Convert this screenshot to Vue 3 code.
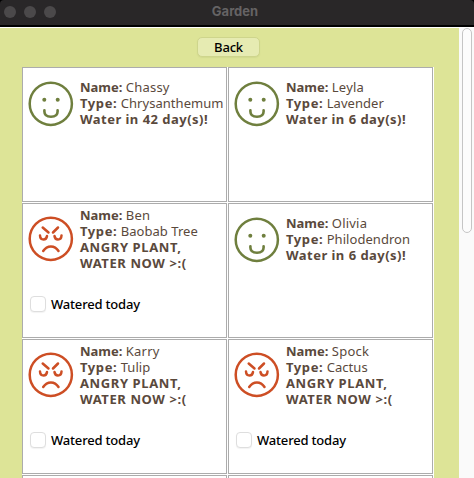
<script setup>
const plants = [
  { name: 'Chassy', type: 'Chrysanthemum', days: 42 },
  { name: 'Leyla', type: 'Lavender', days: 6 },
  { name: 'Ben', type: 'Baobab Tree', days: 0 },
  { name: 'Olivia', type: 'Philodendron', days: 6 },
  { name: 'Karry', type: 'Tulip', days: 0 },
  { name: 'Spock', type: 'Cactus', days: 0 },
]
</script>

<template>
  <div class="window">
    <header class="titlebar">
      <div class="lights"><i></i><i></i><i></i></div>
      <span class="title">Garden</span>
    </header>
    <div class="body">
      <main class="content">
        <button class="back">Back</button>
        <div class="grid">
          <section v-for="p in plants" :key="p.name" class="card" :class="{ angry: !p.days }">
            <div class="info">
              <svg v-if="p.days" class="face" viewBox="0 0 46 46">
                <circle cx="22.8" cy="22.8" r="21.1" stroke-width="2.5" />
                <circle class="dot" cx="16.3" cy="18.8" r="2" />
                <circle class="dot" cx="29.700" cy="18.8" r="2" />
                <path d="M16.400 29.300v1.200q0 5.200 6.600 5.200t6.600-5.200v-1.200" stroke-width="2.6" />
              </svg>
              <svg v-else class="face" viewBox="0 0 46 46">
                <circle cx="22.8" cy="22.8" r="21.1" stroke-width="2.5" />
                <path
                  d="M14.700 11.500l5.800 5M30 11.500l-5 5M12 19.500q.2 4 3.500 4 3 0 3.500-3.500M26.500 20q.5 3.500 3.500 3.500 3.300 0 3.500-4M15.200 35q3-4.600 7.700-4.600t7.600 4.600"
                  stroke-width="2.5"
                />
              </svg>
              <div class="text">
                <div><b>Name:</b> <span class="name">{{ p.name }}</span></div>
                <div><b class="type-label">Type:</b> <span class="type">{{ p.type }}</span></div>
                <div v-if="p.days"><b class="due">Water in {{ p.days }} day(s)!</b></div>
                <template v-else>
                  <div><b class="caps">ANGRY PLANT,</b></div>
                  <div><b class="caps">WATER NOW &gt;:(</b></div>
                </template>
              </div>
            </div>
            <label v-if="!p.days" class="watered"><input type="checkbox" /><span>Watered today</span></label>
          </section>
          <section class="card"></section>
          <section class="card"></section>
        </div>
      </main>
      <aside class="track"><div class="thumb"></div></aside>
    </div>
  </div>
</template>

<style>
body { background: #000; overflow: hidden; }
</style>

<style scoped>
* { box-sizing: border-box; }
.window {
  width: 474px;
  height: 478px;
  overflow: hidden;
  display: flex;
  flex-direction: column;
  font-family: "Noto Sans", "Open Sans", sans-serif;
  font-size: 13px;
}
.titlebar {
  flex: none;
  height: 27px;
  background: #292728;
  border-bottom: 2px solid #000;
  border-radius: 4px 4px 0 0;
  display: grid;
  grid-template-columns: 1fr auto 1fr;
  align-items: start;
}
.lights { display: flex; gap: 8px; padding: 6px 0 0 4px; }
.lights i { width: 12px; height: 12px; border-radius: 50%; background: #4b494a; }
.title {
  font: 700 13px/23px Inter, sans-serif;
  color: #656364;
  padding-right: 4px;
}
.body { flex: 1; min-height: 0; display: flex; border-top: 1px solid #fff; }
.content {
  flex: 1;
  background: #dde497;
  display: flex;
  flex-direction: column;
  align-items: flex-start;
  padding: 9px 0 0 22px;
}
.back {
  flex: none;
  margin: 0 0 10px 175px;
  width: 63px;
  height: 20px;
  padding: 0;
  border: 1px solid #ced58c;
  border-radius: 5px;
  background: #e6ebb2;
  box-shadow: 0 1px 1px #c3ca8566;
  font: 500 13px/16px "Noto Sans", sans-serif;
  letter-spacing: -0.2px;
  color: #000;
}
.grid {
  flex: none;
  width: 412px;
  display: grid;
  grid-template-columns: 205px 205px;
  grid-auto-rows: 135px;
  gap: 1px;
  background: #fff;
}
.card {
  border: 1px solid #acacac;
  background: #fff;
  padding: 11px 0 0 5px;
}
.info { display: flex; align-items: flex-start; }
.face {
  flex: none;
  width: 46px;
  height: 46px;
  margin-top: 2px;
  fill: none;
  stroke: #6f7f3e;
  stroke-linecap: round;
  stroke-linejoin: round;
}
.dot { fill: #6f7f3e; stroke: none; }
.text { padding-left: 6px; line-height: 16px; color: #5a493c; white-space: nowrap; }
.text div { height: 16px; }
.type-label { letter-spacing: 0.6px; }
.name { letter-spacing: 0.2px; }
.type { letter-spacing: 0.05px; }
.due { letter-spacing: 0.47px; }
.caps { letter-spacing: 0.6px; }
.angry { padding-top: 3px; }
.angry .face { margin-top: 9px; stroke: #cd4e24; }
.angry .info { height: 56px; }
.watered {
  display: flex;
  align-items: center;
  height: 16px;
  margin-top: 33px;
  padding-left: 2px;
  color: #000;
  font-weight: 500;
  letter-spacing: -0.18px;
}
.watered input {
  appearance: none;
  flex: none;
  width: 16px;
  height: 16px;
  margin: 0 5px 0 0;
  border: 1px solid #dedede;
  border-radius: 4px;
  background: #fff;
  box-shadow: 0 1px 1px #0000000d;
}
.track { width: 15px; background: #fafafa; padding-left: 3px; }
.thumb {
  width: 10px;
  height: 205px;
  border: 1px solid #c5c5c5;
  border-radius: 5px;
  background: #fcfcfc;
}
</style>
